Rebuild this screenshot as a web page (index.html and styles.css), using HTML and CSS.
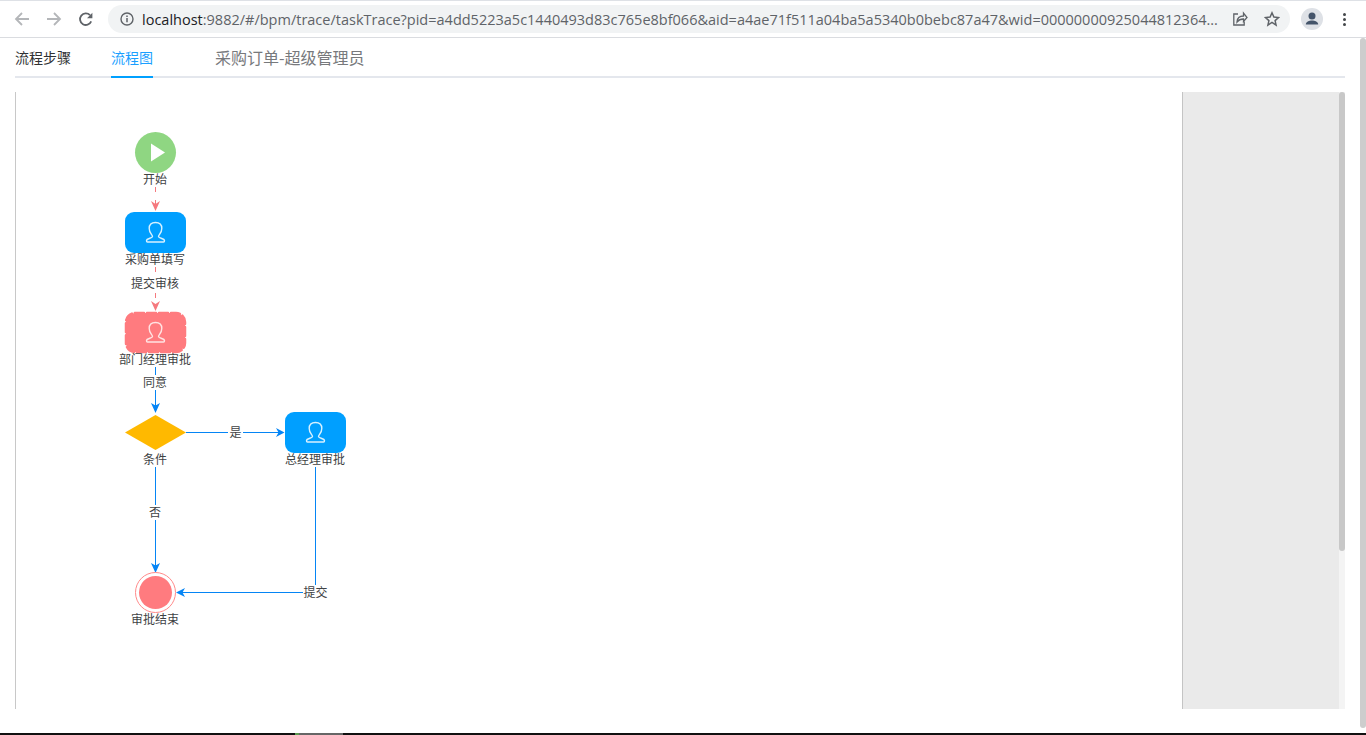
FILE: index.html
```html
<!doctype html>
<html lang="zh-CN">
  <head>
    <title>流程图</title>
    <meta charset="utf-8" />
    <link rel="stylesheet" href="styles.css">
  </head>

  <body>
    <div class="top-strip"></div>
    <header class="toolbar">
      <div class="nav-buttons">
        <svg class="nav-icon" width="16" height="16" viewBox="0 0 16 16"><path d="M15 8H2M8 2 2 8l6 6" fill="none" stroke="#b4b6b9" stroke-width="1.8"/></svg>
        <svg class="nav-icon" width="16" height="16" viewBox="0 0 16 16"><path d="M1 8h13M8 2l6 6-6 6" fill="none" stroke="#b4b6b9" stroke-width="1.8"/></svg>
        <svg class="nav-icon" width="16" height="16" viewBox="0 0 16 16"><path d="M13.2 10.4A5.8 5.8 0 1 1 12 4.1" fill="none" stroke="#5f6368" stroke-width="1.8"/><path d="M14.4 1.8v5.4H9z" fill="#5f6368"/></svg>
      </div>
      <div class="omnibox">
        <svg width="14" height="14" viewBox="0 0 14 14"><circle cx="7" cy="7" r="6" fill="none" stroke="#5f6368" stroke-width="1.4"/><path d="M7 6v4.2M7 3.6v1.3" stroke="#5f6368" stroke-width="1.5"/></svg>
        <div class="url"><span class="host">localhost</span>:9882/#/bpm/trace/taskTrace?pid=a4dd5223a5c1440493d83c765e8bf066&amp;aid=a4ae71f511a04ba5a5340b0bebc87a47&amp;wid=00000000925044812364...</div>
        <svg class="share-icon" width="16" height="16" viewBox="0 0 16 16"><path d="M6 3H1.800v11h10.400v-3.500" fill="none" stroke="#5f6368" stroke-width="1.300"/><path d="M5 11c.2-4 3-6 6.500-6V2.200L15 6.500 11.500 10.500V8C8.500 8 6.500 9 5 11z" fill="none" stroke="#5f6368" stroke-width="1.300"/></svg>
        <svg width="16" height="16" viewBox="0 0 16 16"><path d="m8 1.800 1.900 4.200 4.600.5-3.400 3.100.95 4.500L8 11.300l-4.050 2.800.95-4.500L1.500 6.500l4.600-.5z" fill="none" stroke="#5f6368" stroke-width="1.500"/></svg>
      </div>
      <div class="avatar">
        <svg width="22" height="22" viewBox="0 0 22 22"><circle cx="11" cy="11" r="11" fill="#dee1e6"/><circle cx="11" cy="8" r="3.500" fill="#44546a"/><path d="M4.800 16.500c0-2.800 3.400-4 6.200-4s6.200 1.200 6.200 4z" fill="#44546a"/></svg>
      </div>
      <div class="menu-dots"><i></i><i></i><i></i></div>
    </header>

    <div class="page">
      <main class="content">
        <nav class="tabs">
          <span class="tab">流程步骤</span>
          <span class="tab tab-active">流程图</span>
          <span class="tab-title">采购订单-超级管理员</span>
        </nav>

        <section class="designer">
          <div class="canvas">
            <svg class="flow" width="1166" height="617" viewBox="16 92 1166 617">
              <defs>
                <g id="person">
                  <path d="M-3 4.500C-3 2.800-6.300 1-6.300-3.500-6.300-7.400-3.700-9.500 0-9.500S6.300-7.400 6.300-3.500C6.300 1 3 2.800 3 4.500 3 6.500 9 6 9 8.700 9 9.800 8.500 10 8 10H-8C-8.500 10-9 9.800-9 8.700-9 6-3 6.500-3 4.500Z" fill="none" stroke-width="1.400"/>
                </g>
              </defs>

              <!-- 连线 -->
              <path class="edge-done" d="M155.500 187V204"/>
              <path class="arrow-done" d="M151 201l4.500 3 4.500-3-4.500 10z"/>
              <path class="edge-done" d="M155.500 267V304"/>
              <path class="arrow-done" d="M151 301l4.500 3 4.500-3-4.500 10z"/>
              <path class="edge" d="M155.500 367V406"/>
              <path class="arrow" d="M151 403l4.500 2.500 4.500-2.500-4.500 10z"/>
              <path class="edge" d="M186 432.500H279"/>
              <path class="arrow" d="M276 428l8.500 4.500-8.500 4.500 2.500-4.500z"/>
              <path class="edge" d="M155.500 467V566"/>
              <path class="arrow" d="M151 563l4.500 2.500 4.500-2.500-4.500 10z"/>
              <path class="edge" d="M315.500 467V592.500H182"/>
              <path class="arrow" d="M176 592.500l9-4.500-2.500 4.500 2.500 4.500z"/>

              <!-- 节点 -->
              <circle cx="155.500" cy="152.500" r="20.500" fill="#8fd682"/>
              <path d="M151 143.500 165 152.500 151 161.500z" fill="#fff"/>

              <rect x="125" y="212" width="61" height="41" rx="9" fill="#009fff"/>
              <use href="#person" x="155.500" y="232" stroke="#d8f1ff"/>

              <rect class="node-current" x="126" y="313" width="59" height="39" rx="9"/>
              <use href="#person" x="155.500" y="332" stroke="#ffe3e3"/>

              <path d="M155.500 415 186 432.500 155.500 450 125 432.500z" fill="#ffb900"/>

              <rect x="285" y="412" width="61" height="41" rx="9" fill="#009fff"/>
              <use href="#person" x="315.500" y="432" stroke="#d8f1ff"/>

              <circle cx="155.500" cy="592.500" r="20" fill="#fff" stroke="#ff8a8a" stroke-width="1"/>
              <circle cx="155.500" cy="592.500" r="16.500" fill="#ff7b7f"/>

              <!-- 文字 -->
              <text class="label" x="155" y="184">开始</text>
              <text class="label" x="155" y="264">采购单填写</text>
              <rect class="label-bg" x="130" y="276" width="50" height="15"/>
              <text class="label" x="155" y="288">提交审核</text>
              <text class="label" x="155" y="364">部门经理审批</text>
              <rect class="label-bg" x="142" y="375" width="26" height="15"/>
              <text class="label" x="155" y="387">同意</text>
              <text class="label" x="155" y="464">条件</text>
              <text class="label" x="315" y="464">总经理审批</text>
              <rect class="label-bg" x="228" y="425" width="15" height="15"/>
              <text class="label" x="235.500" y="437">是</text>
              <rect class="label-bg" x="148" y="505" width="15" height="15"/>
              <text class="label" x="155" y="517">否</text>
              <rect class="label-bg" x="303" y="585" width="25" height="15"/>
              <text class="label" x="315.500" y="597">提交</text>
              <text class="label" x="155" y="624">审批结束</text>
            </svg>
          </div>
          <aside class="side-panel">
            <div class="panel-body"></div>
            <div class="panel-scroll"><div class="panel-thumb"></div></div>
          </aside>
        </section>
      </main>
      <div class="page-scroll"><div class="page-thumb"></div></div>
    </div>

    <footer class="taskbar"><span class="task-green"></span><span class="task-gray"></span></footer>
  </body>
</html>
```

FILE: styles.css
```css
html,
body {
  margin: 0;
  height: 100%;
  overflow: hidden;
}

body {
  display: flex;
  flex-direction: column;
  height: 735px;
  background-color: #fff;
  font-family: "Noto Sans CJK SC", "Liberation Sans", sans-serif;
}

.top-strip {
  height: 1px;
  background-color: #dee1e6;
}

.toolbar {
  display: flex;
  align-items: center;
  height: 36px;
  flex-shrink: 0;
  border-bottom: 1px solid #dadce0;
  box-sizing: content-box;
}

.nav-buttons {
  display: flex;
  align-items: center;
  gap: 16px;
  padding-left: 14px;
  width: 94px;
  box-sizing: border-box;
}

.omnibox {
  display: flex;
  align-items: center;
  width: 1182px;
  height: 28px;
  margin-left: 14px;
  box-sizing: border-box;
  padding: 0 10px 0 12px;
  border-radius: 14px;
  background-color: #f1f3f4;
}

.url {
  flex: 1;
  margin-left: 8px;
  font-family: "Open Sans", "Liberation Sans", sans-serif;
  font-size: 14.5px;
  color: #5f6368;
  white-space: nowrap;
  overflow: hidden;
}

.host {
  color: #202124;
}

.share-icon {
  margin: 0 16px 0 8px;
}

.avatar {
  display: flex;
  margin-left: 11px;
}

.menu-dots {
  display: flex;
  flex-direction: column;
  gap: 2px;
  margin-left: 20px;
}

.menu-dots i {
  width: 3px;
  height: 3px;
  border-radius: 50%;
  background-color: #44474a;
}

.page {
  display: flex;
  flex: 1;
  min-height: 0;
}

.content {
  flex: 1;
  min-width: 0;
  padding: 0 15px;
}

.tabs {
  display: flex;
  align-items: center;
  height: 38px;
  border-bottom: 2px solid #e4e7ed;
  box-sizing: content-box;
}

.tab {
  position: relative;
  display: block;
  height: 38px;
  line-height: 39px;
  font-size: 14px;
  color: #303133;
  margin-right: 40px;
}

.tab-active {
  color: #1a9fff;
  margin-right: 62px;
}

.tab-active::after {
  content: "";
  position: absolute;
  left: 0;
  right: 0;
  bottom: -2px;
  height: 2px;
  background-color: #00a0ff;
}

.tab-title {
  font-size: 16px;
  color: #77797c;
}

.designer {
  display: flex;
  height: 617px;
  margin-top: 14px;
  border-left: 1px solid #c8c8c8;
}

.canvas {
  width: 1166px;
  flex-shrink: 0;
}

.flow {
  display: block;
}

.edge,
.edge-done {
  fill: none;
  stroke-width: 1;
}

.edge {
  stroke: #0585f5;
}

.edge-done {
  stroke: #f5797e;
  stroke-dasharray: 5 8;
}

.arrow {
  fill: #0585f5;
}

.arrow-done {
  fill: #f5797e;
}

.node-current {
  fill: #ff7b7f;
  stroke: #ff7b7f;
  stroke-width: 2.5;
  stroke-dasharray: 9 3;
  stroke-linecap: round;
}

.label {
  font-size: 12px;
  fill: #404244;
  text-anchor: middle;
}

.label-bg {
  fill: #fff;
}

.side-panel {
  display: flex;
  flex: 1;
  border-left: 1px solid #c4c4c4;
  background-color: #eaeaea;
}

.panel-body {
  flex: 1;
}

.panel-scroll {
  width: 6px;
  background-color: #f4f4f4;
}

.panel-thumb {
  height: 459px;
  border-radius: 3px;
  background-color: #c8c8c8;
}

.page-scroll {
  width: 6px;
  flex-shrink: 0;
}

.page-thumb {
  height: 690px;
  border-radius: 3px;
  background-color: #cdcdcd;
}

.taskbar {
  display: flex;
  height: 2px;
  padding-left: 295px;
  flex-shrink: 0;
  background-color: #111;
}

.task-green {
  width: 4px;
  background-color: #5c9a52;
}

.task-gray {
  width: 44px;
  background-color: #666;
}
```
